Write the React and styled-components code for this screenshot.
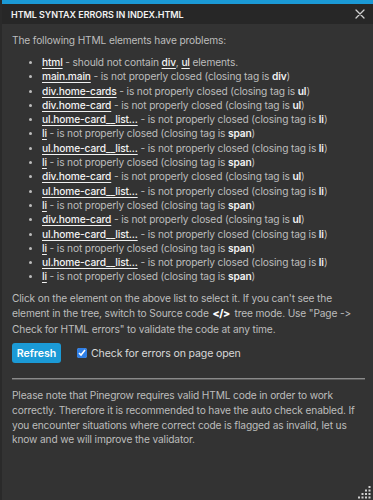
import React from "react";
import styled, { createGlobalStyle } from "styled-components";

const GlobalStyle = createGlobalStyle`
  html, body { margin: 0; padding: 0; background: #333333; }
  body {
    font-family: Inter, "Liberation Sans", Arial, sans-serif;
    font-variant-ligatures: none;
    font-feature-settings: "calt" 0, "liga" 0;
  }
  * { box-sizing: border-box; }
`;

const Panel = styled.div`
  position: relative;
  width: 373px;
  height: 500px;
  background: #333333;
  border-left: 2px solid #2a2a2a;
  display: flex;
  flex-direction: column;
  overflow: hidden;
`;

const TopStrip = styled.div`
  height: 4px;
  background: #1b9ad6;
  margin-left: -2px;
`;

const Header = styled.div`
  height: 20px;
  background: #272727;
  display: flex;
  align-items: center;
  justify-content: space-between;
  padding: 0 7px 0 11px;
  margin-left: -2px;
`;

const Title = styled.div`
  color: #f2f2f2;
  font-size: 9px;
  font-weight: 600;
  letter-spacing: -0.05px;
`;

const CloseButton = styled.button`
  background: none;
  border: 0;
  padding: 0;
  width: 12px;
  height: 12px;
  display: flex;
  align-items: center;
  justify-content: center;
  cursor: pointer;
`;

const Body = styled.div`
  padding: 9px 8px 0 10px;
  color: #bdbdbd;
  font-size: 10.2px;
  letter-spacing: -0.15px;
  line-height: 15px;
`;

const Text = styled.p`
  margin: 0;
  line-height: ${(p) => p.$lh || "15px"};
`;

const ErrorList = styled.ul`
  margin: 7px 0 7px 0;
  padding-left: 30px;
  line-height: 14.3px;
  li::marker { color: #bdbdbd; font-size: 9px; }
`;

const ElementLink = styled.a`
  color: #f2f2f2;
  font-weight: 500;
  text-decoration: underline;
  text-decoration-thickness: 1px;
  text-underline-offset: 2px;
  cursor: pointer;
`;

const Tag = styled.b`
  color: #f2f2f2;
  font-weight: 600;
`;

const CodeIcon = styled.span`
  color: #ffffff;
  font-weight: 800;
  font-size: 10.5px;
  letter-spacing: -0.4px;
  margin: 0 2px 0 1px;
`;

const Controls = styled.div`
  display: flex;
  align-items: center;
  margin-top: 6px;
  gap: 16px;
`;

const RefreshButton = styled.button`
  background: #1b9ad6;
  color: #ffffff;
  border: 0;
  border-radius: 3px;
  height: 20px;
  width: 49px;
  padding: 0;
  font-family: inherit;
  font-size: 10.6px;
  font-weight: 600;
  cursor: pointer;
`;

const CheckLabel = styled.label`
  display: flex;
  align-items: center;
  gap: 4px;
  color: #d8d8d8;
  font-size: 10.6px;
  cursor: pointer;
`;

const CheckBox = styled.input`
  width: 10px;
  height: 10px;
  margin: 0;
  accent-color: #2f7fe6;
`;

const Divider = styled.hr`
  margin: 15px 0 8px 0;
  border: 0;
  border-top: 1px solid #8a8a8a;
  border-bottom: 1px solid #5a5a5a;
  height: 0;
`;

const ResizeHandle = styled.svg`
  position: absolute;
  right: 2px;
  bottom: 1px;
`;

const items = [
  { el: "html", html: true },
  { el: "main.main", tag: "div" },
  { el: "div.home-cards", tag: "ul" },
  { el: "div.home-card", tag: "ul" },
  { el: "ul.home-card__list...", tag: "li" },
  { el: "li", tag: "span" },
  { el: "ul.home-card__list...", tag: "li" },
  { el: "li", tag: "span" },
  { el: "div.home-card", tag: "ul" },
  { el: "ul.home-card__list...", tag: "li" },
  { el: "li", tag: "span" },
  { el: "div.home-card", tag: "ul" },
  { el: "ul.home-card__list...", tag: "li" },
  { el: "li", tag: "span" },
  { el: "ul.home-card__list...", tag: "li" },
  { el: "li", tag: "span" },
];

export default function App() {
  const dots = [];
  for (let r = 0; r < 4; r++) {
    for (let c = 3 - r; c < 4; c++) {
      dots.push(<rect key={r + "-" + c} x={c * 3.5} y={r * 3.5} width="2" height="2" fill="#d0d0d0" />);
    }
  }
  return (
    <>
      <GlobalStyle />
      <Panel>
        <TopStrip />
        <Header>
          <Title>HTML SYNTAX ERRORS IN INDEX.HTML</Title>
          <CloseButton aria-label="Close">
            <svg width="10" height="10" viewBox="0 0 10 10">
              <path d="M1 1 L9 9 M9 1 L1 9" stroke="#cfcfcf" strokeWidth="1.3" strokeLinecap="round" />
            </svg>
          </CloseButton>
        </Header>
        <Body>
          <Text>The following HTML elements have problems:</Text>
          <ErrorList>
            {items.map((it, i) => (
              <li key={i}>
                <ElementLink>{it.el}</ElementLink>
                {it.html ? (
                  <>
                    {" "}- should not contain <ElementLink>div</ElementLink>, <ElementLink>ul</ElementLink> elements.
                  </>
                ) : (
                  <>
                    {" "}- is not properly closed (closing tag is <Tag>{it.tag}</Tag>)
                  </>
                )}
              </li>
            ))}
          </ErrorList>
          <Text $lh="15.5px">
            Click on the element on the above list to select it. If you can't see the element in the tree, switch to Source code <CodeIcon>&lt;/&gt;</CodeIcon> tree mode. Use "Page -&gt; Check for HTML errors" to validate the code at any time.
          </Text>
          <Controls>
            <RefreshButton>Refresh</RefreshButton>
            <CheckLabel>
              <CheckBox type="checkbox" defaultChecked />
              Check for errors on page open
            </CheckLabel>
          </Controls>
          <Divider />
          <Text $lh="14.7px">
            Please note that Pinegrow requires valid HTML code in order to work correctly. Therefore it is recommended to have the auto check enabled. If you encounter situations where correct code is flagged as invalid, let us know and we will improve the validator.
          </Text>
        </Body>
        <ResizeHandle width="13" height="13" viewBox="0 0 13 13">
          {dots}
        </ResizeHandle>
      </Panel>
    </>
  );
}
